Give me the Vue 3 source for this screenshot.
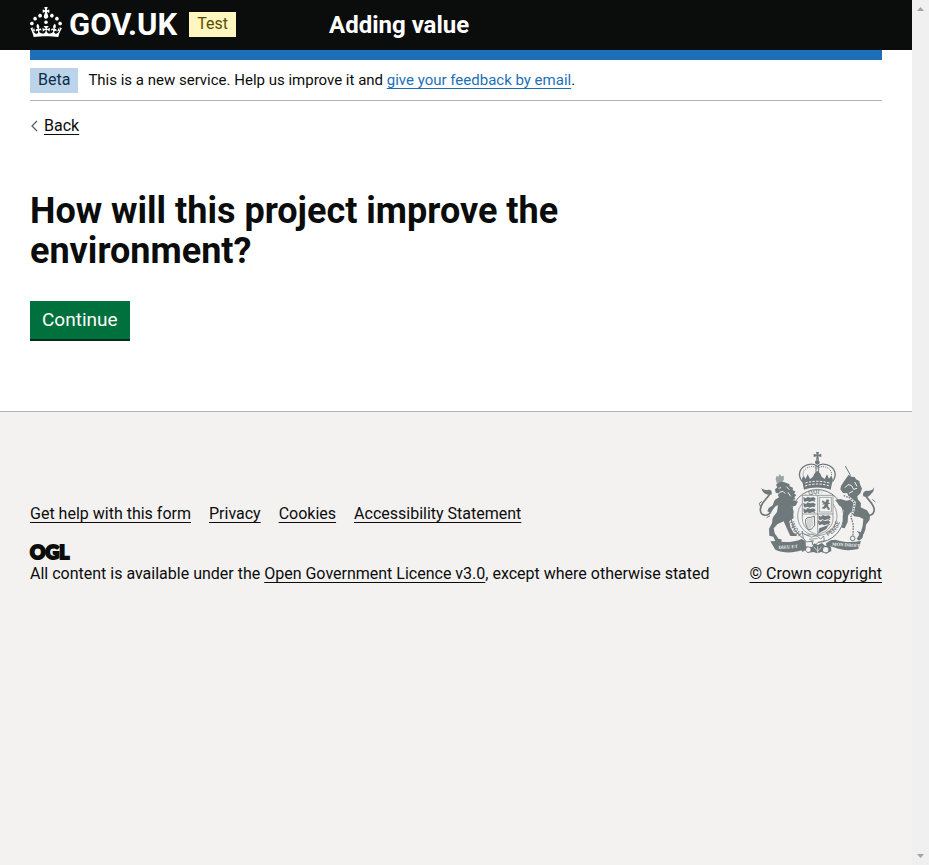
<script setup>
const footerLinks = ['Get help with this form', 'Privacy', 'Cookies', 'Accessibility Statement']
</script>

<template>
  <div class="window">
    <div class="page">
      <header class="header">
        <div class="container header-grid">
          <div class="brand">
            <a href="#" class="logo" aria-label="GOV.UK">
              <svg class="crown" viewBox="0 0 32 30" width="32" height="30" aria-hidden="true">
                <path fill="currentColor" d="M22.6 10.4c-1 .4-2-.1-2.4-1-.4-.9.1-2 1-2.4.9-.4 2 .1 2.4 1s-.1 2-1 2.4m5 3c-1 .4-2-.1-2.4-1-.4-.9.1-2 1-2.4.9-.4 2 .1 2.4 1s0 2-1 2.4m3.2 4.8c-1 .4-2-.1-2.4-1-.4-.9.1-2 1-2.4.9-.4 2 .1 2.4 1s-.1 2-1 2.4M17 4.7l2.3 1.2V2.5l-2.3.7-.2-.2.9-3h-3.4l.9 3-.2.2c-.1.1-2.3-.7-2.3-.7v3.4L15 4.7c.1.1.1.2.2.2l-1.3 4c-.1.2-.1.4-.1.6 0 1.1.8 2 1.9 2.2h.7c1-.2 1.9-1.1 1.9-2.1 0-.2 0-.4-.1-.6l-1.3-4c-.1-.2 0-.2.1-.3m-7.6 5.7c.9.4 2-.1 2.4-1 .4-.9-.1-2-1-2.4-.9-.4-2 .1-2.4 1s0 2 1 2.4m-5 3c.9.4 2-.1 2.4-1 .4-.9-.1-2-1-2.4-.9-.4-2 .1-2.4 1s.1 2 1 2.4m-3.2 4.8c.9.4 2-.1 2.4-1 .4-.9-.1-2-1-2.4-.9-.4-2 .1-2.4 1s0 2 1 2.4m14.8 11c4.4 0 8.6.3 12.3.8 1.1-4.5 2.4-7 3.700-8.800l-2.500-.9c.2 1.300.3 1.900 0 2.700-.4-.4-.8-1.100-1.100-2.300l-1.200 4c.7-.5 1.300-.8 2-.9-1.100 2.500-2.600 3.100-3.500 3-1.100-.2-1.700-1.200-1.500-2.100.3-1.200 1.500-1.500 2.100-.1 1.100-2.300-.8-3-2-2.300 1.900-1.900 2.100-3.500.6-5.600-2.100 1.600-2.100 3.200-1.200 5.500-1.200-1.400-3.200-.6-2.500 1.600.9-1.400 2.100-.5 1.900.8-.2 1.100-1.700 2.100-3.500 1.900-2.700-.2-2.900-2.100-2.900-3.600.7-.1 1.900.5 2.900 1.900l.4-4.300c-1.100 1.100-2.100 1.400-3.200 1.400.4-1.200 2.100-3 2.100-3h-5.400s1.700 1.900 2.100 3c-1.100 0-2.100-.2-3.200-1.400l.4 4.300c1-1.400 2.200-2 2.900-1.900-.1 1.500-.2 3.400-2.900 3.600-1.900.2-3.400-.8-3.500-1.900-.2-1.300 1-2.200 1.900-.8.7-2.300-1.200-3-2.500-1.600.9-2.200.9-3.900-1.200-5.500-1.500 2-1.300 3.700.6 5.600-1.200-.7-3.100 0-2 2.300.6-1.400 1.800-1.100 2.100.1.2.9-.3 1.900-1.500 2.100-.9.2-2.400-.5-3.500-3 .6 0 1.200.3 2 .9l-1.200-4c-.3 1.100-.7 1.900-1.100 2.300-.3-.8-.2-1.400 0-2.700l-2.500.9C1.300 23 2.600 25.500 3.700 30c3.700-.5 7.900-.8 12.300-.8" />
                <circle cx="16" cy="15.200" r="1.800" fill="currentColor" />
              </svg>
              <span>GOV.UK</span>
            </a>
            <strong class="tag tag-yellow">Test</strong>
          </div>
          <a href="#" class="service">Adding value</a>
        </div>
      </header>

      <div class="container">
        <div class="bar"></div>
        <div class="phase">
          <strong class="tag tag-blue">Beta</strong>
          <span class="phase-text">This is a new service. Help us improve it and <a href="#" class="feedback">give your feedback by email</a>.</span>
        </div>
        <a href="#" class="back">
          <svg viewBox="0 0 8 12" width="8" height="12" aria-hidden="true">
            <path d="M7 1L2 6l5 5" fill="none" stroke="#505a5f" stroke-width="1.2" />
          </svg>
          <span class="link">Back</span>
        </a>
        <main class="main">
          <h1>How will this project improve the environment?</h1>
          <button type="button" class="button">Continue</button>
        </main>
      </div>

      <footer class="footer">
        <div class="container footer-grid">
          <div>
            <nav class="footer-nav">
              <a v-for="label in footerLinks" :key="label" href="#" class="link">{{ label }}</a>
            </nav>
            <div class="ogl">OGL</div>
            <div>All content is available under the <a href="#" class="link">Open Government Licence v3.0</a>, except where otherwise stated</div>
          </div>
          <a href="#" class="copyright">
            <svg class="crest" viewBox="45 36 375 306" width="125" height="102" aria-hidden="true">
              <defs>
                <path id="garter-left" d="M186 280A68 68 0 0 1 180 178" />
                <path id="garter-top" d="M184 182A68 68 0 0 1 280 182" />
                <path id="garter-right" d="M263 289A68 68 0 0 0 299 205" />
              </defs>
              <!-- crown -->
              <g fill="currentColor">
                <path d="M228 36h9l-2 8 9-3v10l-9-2 2 10h-9l2-10-9 2V41l9 3z" />
                <circle cx="232" cy="67" r="7" />
                <path d="M188 130c-4-8-3-15 2-22l7 8 6-13 7 14 9-7 4-9 9-9 9 9 4 9 9 7 7-14 6 13 7-8c5 7 6 14 2 22l-4 19c-25-9-55-9-80 0z" />
              </g>
              <g fill="none" stroke="currentColor">
                <path d="M186 124c-15-20-7-42 18-50 14-4 23 0 28 6 5-6 14-10 28-6 25 8 33 30 18 50" stroke-width="4" />
                <path d="M193 115c-9-16-1-30 16-34 11-3 18 0 23 7 5-7 12-10 23-7 17 4 25 18 16 34" stroke-width="3" stroke-dasharray="3 3" />
                <path d="M228 75v34M236 75v34" stroke-width="3" />
                <path d="M196 129c24-7 48-7 72 0M195 138c25-8 49-8 74 0" stroke="#f3f2f1" stroke-width="3" stroke-dasharray="7 4" />
              </g>
              <!-- lion -->
              <g fill="currentColor">
                <path d="M107 117l3-10 5 3 4-8 5 7 7-2 1 10-5 10-17 2z" opacity=".65" />
                <path d="M108 134c7-9 20-12 29-6l11 4 1 7 10 4-1 7 9 5-5 5 7 6-6 5 3 7-8 2c14 3 25 8 33 17l7 4-3 8-9-1-18-11-13 2 7 17-2 18-12 10 3 17 10 18 9 2v7h-19l-10-22-10-22-18 8-12 13 3 15 12 17 9 1-1 8h-17l-7-16-12-3-1-21 9-16 2-17 13-17 3-21-9 5-13 18-10-4 4-10 12-8 6-16 13-8-4-8 7-3-13-3-2-10 7-6z" />
                <path d="M64 143c5 7 12 6 17 8 10-5 18 3 13 13-4-2-8-2-11 0-9-2-17-9-19-21z" />
              </g>
              <path d="M91 158c-3 14-31 30-30 51 1 19 22 23 32 5" fill="none" stroke="currentColor" stroke-width="5" />
              <path d="M66 184l-8 6 3 9M80 233l10-6" fill="none" stroke="currentColor" stroke-width="3" />
              <path d="M116 145l7-2M118 157l11-3 7 7M139 140l9 9M144 157l8 12" stroke="#f3f2f1" stroke-width="3" fill="none" />
              <!-- unicorn -->
              <g fill="currentColor">
                <path d="M326 104l8 6 10 1 4 7 10 5 2 10 6 13-5 14-9 9 1 8 10 13-1 12 19 9 9 14-1 14-11 15-2 16-11 24-8 1 6-20 5-18 2-20-12-6-16-2-10-12-8 10-1 19-9 19-9-2 4-18-1-17 4-16-9-12-19-12-12 1-10-6 8-6 14 3 17-3 19 5 16-4L326 170l-4-10-13-1-8-11 2-10 9-14z" />
                <path d="M402 142c-2 8-10 10-17 11-9-4-19 4-15 16 9 3 16 2 21-5 6-5 12-11 11-22z" />
                <path d="M350 272l20 8-3 15-10 7-7-5 8-14z" />
              </g>
              <path d="M375 162c4 16 33 32 27 52-5 16-23 16-31 4" fill="none" stroke="currentColor" stroke-width="5" />
              <path d="M397 178l9 8M316 78l16 29" fill="none" stroke="currentColor" stroke-width="3" />
              <path d="M315 143l9-9 10 2 7 12 10-3M327 160l12-7M344 126l7 13" stroke="#f3f2f1" stroke-width="3" fill="none" />
              <path d="M311 167l17 6 16 14-4 25-7 18 7 25-1 31" fill="none" stroke="#f3f2f1" stroke-width="7" />
              <path d="M311 167l17 6 16 14-4 25-7 18 7 25-1 31" fill="none" stroke="currentColor" stroke-width="4" stroke-dasharray="5 3" />
              <circle cx="338" cy="295" r="7" fill="#f3f2f1" stroke="currentColor" stroke-width="3" />
              <!-- garter -->
              <g fill="none" stroke="currentColor">
                <circle cx="232" cy="228" r="72" fill="#f3f2f1" stroke="none" />
                <circle cx="232" cy="228" r="79" stroke-width="3" />
                <circle cx="232" cy="228" r="59" stroke-width="2" />
              </g>
              <g class="motto" fill="currentColor">
                <text><textPath href="#garter-left">HONI·S</textPath></text>
                <text><textPath href="#garter-top" startOffset="18">· QUI ·</textPath></text>
                <text><textPath href="#garter-right">PENSE</textPath></text>
              </g>
              <!-- shield -->
              <path d="M187 166h92v70c0 24-21 42-46 48-25-6-46-24-46-48z" fill="#f3f2f1" stroke="currentColor" stroke-width="2" />
              <path d="M233 166v118M187 222h92" stroke="currentColor" stroke-width="2" />
              <g fill="currentColor">
                <path id="lion-bar" d="M190 171l8 4 5-5 8 3 10-2 7 6-5 3 4 5-10-2-8 3-7-3-8 3-3-4z" />
                <use href="#lion-bar" y="17" />
                <use href="#lion-bar" y="34" />
                <use href="#lion-bar" x="45" y="55" />
                <use href="#lion-bar" x="44" y="70" />
                <path d="M238 265l29-11-8 13-25 14z" />
                <path d="M248 181l8 6 4-9 8 2-3 7 6 4-7 2 1 7 6 8-7 2-4-8-7 5-9-3 8-5 2-6-8 1 5-6-6-1z" />
              </g>
              <g fill="none" stroke="currentColor">
                <rect x="238" y="172" width="36" height="44" stroke-width="2.5" opacity=".7" />
                <path d="M197 238c3-8 15-3 26-10l1 28c-5 9-12 14-18 13-8-8-10-19-9-31z" stroke-width="3" />
                <path d="M204 237v28M210 236v30M216 234v25" stroke-width="1.5" />
              </g>
              <path d="M186 273c4 12 18 15 29 10l17 6 10 8 9-9 2 14-18 5-12 10-7-8 4-7-20 4-10-11z" fill="#f3f2f1" stroke="currentColor" stroke-width="2.5" />
              <path d="M190 281l24 10 13-3M207 298l26-3M218 307l-1 8" fill="none" stroke="currentColor" stroke-width="2" />
              <!-- scroll -->
              <g fill="currentColor">
                <path d="M91 304l18-1c24 5 51 5 76-6l12 6 1 25-10 8-4-5c-26 9-58 8-78-2z" />
                <path d="M272 301l14-2c24 8 48 9 77 4l-8 24c-25 6-53 4-73-5l-12-3-9 12-3-21z" />
                <path d="M190 326l9-7 17 2 7-11 10 5 13-6 9 8 18 3 1 13-15 8-15-5-12 4-12-4-17 3z" />
              </g>
              <circle cx="205" cy="329" r="7" fill="#f3f2f1" />
              <circle cx="257" cy="329" r="8" fill="#f3f2f1" />
              <path d="M221 320l12 14 12-14M233 319v20" fill="none" stroke="#f3f2f1" stroke-width="2" />
              <g class="scroll-text" fill="#f3f2f1">
                <text x="116" y="325" transform="rotate(-4 148 322)">DIEU ET</text>
                <text x="276" y="319" transform="rotate(3 316 318)">MON DROIT</text>
              </g>
            </svg>
            <span class="link">© Crown copyright</span>
          </a>
        </div>
      </footer>
    </div>

    <div class="scrollbar" aria-hidden="true">
      <svg viewBox="0 0 7 4" width="7" height="4"><path d="M3.500 0L7 4H0z" fill="#a3a3a3" /></svg>
      <svg viewBox="0 0 7 4" width="7" height="4"><path d="M0 0h7L3.500 4z" fill="#a3a3a3" /></svg>
    </div>
  </div>
</template>

<style>
body {
  margin: 0;
}
</style>

<style scoped>
.window {
  display: flex;
  min-height: 100vh;
  background: #fff;
  color: #0b0c0c;
  font-family: Roboto, "Liberation Sans", sans-serif;
  font-size: 16px;
  line-height: 20px;
}
.page {
  flex: 1;
  min-width: 0;
  display: flex;
  flex-direction: column;
}
.container {
  margin: 0 30px;
}
.scrollbar {
  width: 17px;
  box-sizing: border-box;
  padding: 7px 0;
  display: flex;
  flex-direction: column;
  align-items: center;
  justify-content: space-between;
  background: #f0f0f0;
}
.header {
  background: #0b0c0c;
  color: #fff;
}
.header-grid {
  display: grid;
  grid-template-columns: 1fr 2fr;
  align-items: center;
  height: 50px;
}
.brand,
.logo {
  display: flex;
  align-items: center;
}
.brand {
  gap: 12px;
}
.logo {
  gap: 7px;
  color: #fff;
  text-decoration: none;
  font-size: 31px;
  font-weight: 700;
  line-height: 32px;
}
.crown {
  margin-bottom: 6px;
}
.service {
  padding-left: 15px;
  color: #fff;
  font-size: 24px;
  font-weight: 700;
  line-height: 30px;
  text-decoration: none;
}
.tag {
  padding: 2px 8px 3px;
  font-weight: 400;
}
.tag-yellow {
  margin-bottom: 2px;
  background: #fff7bf;
  color: #594d00;
}
.tag-blue {
  background: #bbd4ea;
  color: #0c2d4a;
}
.bar {
  height: 10px;
  background: #1d70b8;
}
.phase {
  display: flex;
  align-items: baseline;
  gap: 10px;
  padding: 8px 0 7px;
  border-bottom: 1px solid #b1b4b6;
}
.phase-text {
  font-size: 15px;
}
.link,
.feedback {
  color: #0b0c0c;
  text-decoration: underline;
  text-decoration-thickness: 1px;
  text-underline-offset: 3px;
  text-decoration-skip-ink: none;
}
.feedback {
  color: #1d70b8;
}
.back {
  display: inline-flex;
  align-items: center;
  gap: 6px;
  margin-top: 15px;
  text-decoration: none;
}
.main {
  padding: 54px 0 70px;
}
h1 {
  max-width: 568px;
  margin: 0 0 30px;
  font-size: 36px;
  font-weight: 700;
  line-height: 40px;
}
.button {
  display: block;
  margin: 0 0 2px;
  padding: 9px 12px 10px;
  border: 0;
  background: #00703c;
  box-shadow: 0 2px 0 #002d18;
  color: #fff;
  font-family: inherit;
  font-size: 19px;
  line-height: 19px;
}
.footer {
  flex: 1;
  padding-top: 40px;
  border-top: 1px solid #b1b4b6;
  background: #f3f2f1;
}
.footer-grid {
  display: flex;
  align-items: flex-end;
  justify-content: space-between;
  gap: 20px;
}
.footer-nav {
  display: flex;
  flex-wrap: wrap;
  gap: 18px;
  margin-bottom: 20px;
}
.ogl {
  margin-bottom: 4px;
  font-family: Lato, sans-serif;
  font-size: 19px;
  font-weight: 900;
  line-height: 16px;
  -webkit-text-stroke: 2px currentColor;
}
.copyright {
  display: flex;
  flex-direction: column;
  align-items: center;
  gap: 10px;
  white-space: nowrap;
  text-decoration: none;
}
.crest {
  margin-left: 4px;
  color: #6f787b;
}
.motto {
  font-size: 19px;
  font-weight: 500;
}
.scroll-text {
  font-family: "Liberation Serif", serif;
  font-size: 14px;
  font-weight: 700;
}
</style>
